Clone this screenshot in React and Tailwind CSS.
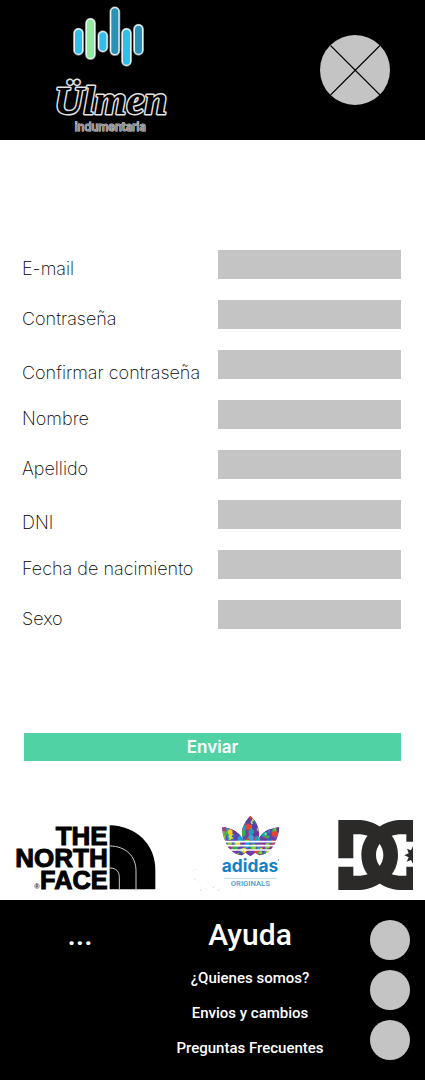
import React from "react";

const FIELDS = [
  { id: "email", label: "E-mail", type: "email" },
  { id: "password", label: "Contraseña", type: "password" },
  { id: "confirm", label: "Confirmar contraseña", type: "password", low: true },
  { id: "name", label: "Nombre", type: "text" },
  { id: "surname", label: "Apellido", type: "text" },
  { id: "dni", label: "DNI", type: "text", low: true },
  { id: "birth", label: "Fecha de nacimiento", type: "text" },
  { id: "sex", label: "Sexo", type: "text" },
];

const BARS = [
  [103, 87, 76, "#33bdea"],
  [139, 57, 119, "#90e99d"],
  [176, 95, 59, "#33bdea"],
  [212, 23, 141, "#2d90b5"],
  [247, 87, 109, "#33bdea"],
  [283, 75, 88, "#2d90b5"],
];

function UlmenLogo() {
  return (
    <svg viewBox="0 0 420 420" className="h-[140px] w-[140px]" role="img" aria-label="Ülmen indumentaria">
      {BARS.map(([x, y, h, fill]) => (
        <g key={x}>
          <rect x={x} y={y} width="25" height={h} rx="12.5" fill="none" stroke="#777" strokeWidth="8" />
          <rect x={x} y={y} width="25" height={h} rx="12.5" fill={fill} stroke="#e8f4f6" strokeWidth="4" />
        </g>
      ))}
      <text x="212" y="343" fontFamily="'Liberation Serif', serif" fontStyle="italic" fontWeight="700" fontSize="122" textAnchor="middle" strokeLinejoin="round" fill="#000" stroke="#e4e4e4" strokeWidth="9" paintOrder="stroke">
        Ülmen
      </text>
      <text x="211" y="392" fontFamily="Inter, sans-serif" fontWeight="500" fontSize="34" textAnchor="middle" fill="#888" stroke="#d4d4d4" strokeWidth="3" paintOrder="stroke">
        indumentaria
      </text>
    </svg>
  );
}

function NorthFaceLogo() {
  return (
    <svg viewBox="0 0 480 270" className="h-[90px] w-[160px]" role="img" aria-label="The North Face">
      <g fontFamily="'Liberation Sans', sans-serif" fontWeight="700" textAnchor="end" fill="#000" stroke="#000" strokeWidth="3">
        <text x="323" y="105" fontSize="78">THE</text>
        <text x="323" y="170" fontSize="78">NORTH</text>
        <text x="323" y="236" fontSize="76">FACE</text>
      </g>
      <text x="103" y="238" fontFamily="'Liberation Sans', sans-serif" fontWeight="700" fontSize="22" fill="#222">®</text>
      <path d="M329 46C410 48 466 104 466 180V238H329Z" fill="#000" />
      <path d="M329 108C378 108 408 140 408 182V238M329 174C350 174 358 186 358 202V238" fill="none" stroke="#ccc" strokeWidth="3" />
    </svg>
  );
}

const PAINT = ["#e8432f", "#5b3fa0", "#1f9bd8", "#e9d92c", "#35b057", "#7a2fa0", "#b23a7d", "#2b62c4", "#8fc93a", "#6a3db0", "#1aa6b0"];

const SPLASHES = Array.from({ length: 230 }, (_, i) => ({
  x: 124 + ((i * 61) % 177),
  y: 16 + ((i * 37 + (i % 7) * 5) % 126),
  r: 4 + ((i * 7) % 5),
  fill: PAINT[(i * 5 + (i % 3)) % PAINT.length],
}));

function AdidasLogo() {
  return (
    <svg viewBox="0 0 360 270" className="h-[90px] w-[120px]" role="img" aria-label="Adidas Originals">
      <defs>
        <clipPath id="trefoil">
          <path d="M211 18C230 34 239 55 237 74C236 84 232 92 226 100H196C190 92 186 82 186 70C186 50 196 33 211 18Z" />
          <path d="M126 52C152 54 172 64 182 78C188 85 192 92 194 100H139C131 85 127 70 126 52Z" />
          <path d="M298 52C272 54 252 64 241 78C235 85 231 92 229 100H284C292 85 297 70 298 52Z" />
          <path d="M137 96H287C284 104 279 110 273 117C264 128 250 135 238 136L226 128L211 139L196 128L186 136C172 135 158 128 149 117C144 110 140 104 137 96Z" />
        </clipPath>
      </defs>
      <g clipPath="url(#trefoil)">
        <rect x="120" y="12" width="182" height="130" fill="#6840a8" />
        {SPLASHES.map((s, i) => (
          <circle key={i} cx={s.x} cy={s.y} r={s.r} fill={s.fill} />
        ))}
        <circle cx="150" cy="66" r="8" fill="#e9cf2c" />
        <circle cx="136" cy="70" r="7" fill="#4fb04c" />
        <circle cx="204" cy="50" r="9" fill="#e04538" />
        <circle cx="284" cy="72" r="9" fill="#e04538" />
        <circle cx="213" cy="82" r="8" fill="#38a8d8" />
      </g>
      <path d="M120 95H302M120 107H302M120 120H302" stroke="#fff" strokeWidth="5" />
      <text x="210" y="187" fontFamily="Inter, sans-serif" fontWeight="700" fontSize="52" textAnchor="middle" fill="#1681c6">adidas</text>
      <circle cx="295" cy="150" r="2" fill="#1681c6" />
      <path d="M133 205H290" stroke="#9cc8e4" strokeWidth="2" />
      <text x="211" y="228" fontFamily="Roboto, sans-serif" fontWeight="500" fontSize="23" textAnchor="middle" fill="#4a98cd">ORIGINALS</text>
      <g fill="#dfe9ef">
        <circle cx="38" cy="182" r="2" />
        <circle cx="48" cy="178" r="2" />
        <circle cx="44" cy="208" r="3" />
        <circle cx="55" cy="214" r="2" />
        <circle cx="62" cy="240" r="3" />
        <circle cx="76" cy="236" r="2" />
        <circle cx="84" cy="216" r="2" />
        <circle cx="100" cy="232" r="3" />
        <circle cx="116" cy="240" r="3" />
        <circle cx="180" cy="252" r="2" />
      </g>
    </svg>
  );
}

function DcLogo() {
  return (
    <svg viewBox="0 0 279 270" className="h-[90px] w-[93px]" role="img" aria-label="DC">
      <g fill="#2b2a29">
        <path d="M55 30H120C145 31 165 40 180 50C215 64 234 98 234 135C234 172 215 206 180 220C165 230 145 239 120 240H55V170H100V197C120 198 132 197 145 192C172 182 190 162 190 135C190 108 172 88 145 78C132 73 120 72 100 73V145H55Z" />
        <path d="M303 30H238C213 31 193 40 178 50C143 64 124 98 124 135C124 172 143 206 178 220C193 230 213 239 238 240H303V170H259V197C238 198 226 197 213 192C186 182 168 162 168 135C168 108 186 88 213 78C226 73 238 72 259 73V95H303Z" />
        <path d="M253 136L266 130L261 116L273 121L279 108V161L273 150L260 155L266 142Z" />
      </g>
    </svg>
  );
}

export default function App() {
  return (
    <div className="w-full bg-white text-black">
      <header className="flex items-center justify-between bg-black pl-10 pr-[35px]">
        <UlmenLogo />
        <button type="button" aria-label="Cerrar" className="h-[70px] w-[70px] rounded-full bg-[#c4c4c4]">
          <svg viewBox="0 0 70 70" className="h-full w-full" aria-hidden="true">
            <path d="M10.5 10.5L60 60M60 10.5L10.5 60" stroke="#000" strokeWidth="1.1" />
          </svg>
        </button>
      </header>

      <main>
        <form className="pt-[110px]" onSubmit={(e) => e.preventDefault()}>
          <div className="pl-[22px] pr-6">
            {FIELDS.map((f) => (
              <div key={f.id} className="grid h-[50px] grid-cols-[196px_1fr] items-start">
                <label
                  htmlFor={f.id}
                  className={`${f.low ? "pt-3" : "pt-2"} whitespace-nowrap font-[Inter,sans-serif] text-[18px] leading-[22px] font-extralight`}
                >
                  {f.label}
                </label>
                <input id={f.id} name={f.id} type={f.type} className="h-[29px] w-full min-w-0 bg-[#c4c4c4] px-2" />
              </div>
            ))}
          </div>
          <div className="px-6 pt-[83px]">
            <button
              type="submit"
              className="block h-7 w-full bg-[#50d2a5] text-center font-[Inter,sans-serif] text-[17px] leading-7 font-semibold text-white"
            >
              Enviar
            </button>
          </div>
        </form>

        <section aria-label="Marcas" className="flex justify-between pt-[49px] pr-3">
          <NorthFaceLogo />
          <AdidasLogo />
          <DcLogo />
        </section>
      </main>

      <footer className="grid grid-cols-[160fr_180fr_85fr] bg-black py-5 font-[Roboto,sans-serif] font-medium text-white">
        <p className="text-center text-[30px] leading-[30px]">...</p>
        <nav className="text-center">
          <h2 className="text-[30px] leading-[30px] font-medium">Ayuda</h2>
          <ul className="flex flex-col gap-[15px] pt-[18px] text-[15px] leading-5 whitespace-nowrap">
            <li><a href="#quienes">¿Quienes somos?</a></li>
            <li><a href="#envios">Envios y cambios</a></li>
            <li><a href="#preguntas">Preguntas Frecuentes</a></li>
          </ul>
        </nav>
        <div className="flex flex-col items-end gap-[10px] pr-[15px]">
          <a href="#red-1" aria-label="Red social 1" className="h-10 w-10 rounded-full bg-[#c4c4c4]" />
          <a href="#red-2" aria-label="Red social 2" className="h-10 w-10 rounded-full bg-[#c4c4c4]" />
          <a href="#red-3" aria-label="Red social 3" className="h-10 w-10 rounded-full bg-[#c4c4c4]" />
        </div>
      </footer>
    </div>
  );
}
